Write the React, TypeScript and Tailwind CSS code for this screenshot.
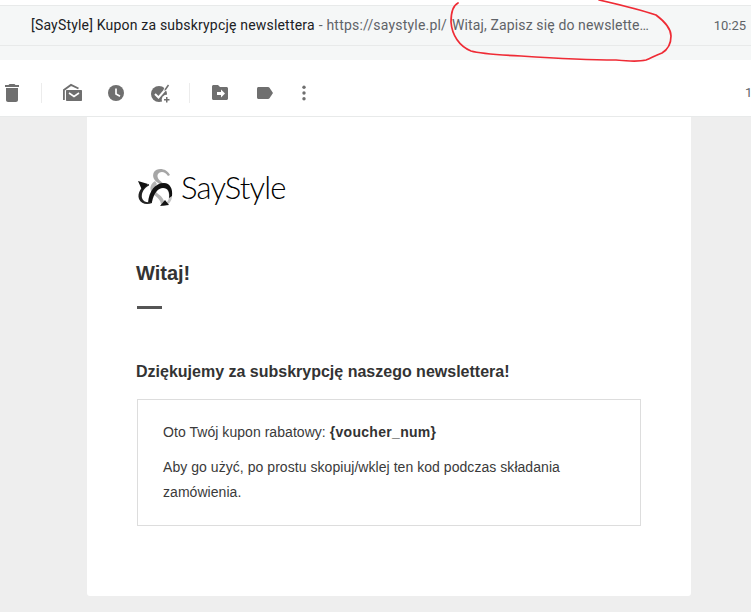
import React from "react";

function Icon({ children }: { children: React.ReactNode }) {
  return (
    <svg width="24" height="24" viewBox="0 0 24 24" fill="#6f6f6f" className="shrink-0">
      {children}
    </svg>
  );
}

function Divider() {
  return <div className="h-5 w-px bg-[#ececec]" />;
}

function Logo() {
  return (
    <div className="flex items-center h-[38px]">
      <svg width="38" height="38" viewBox="0 0 38 38" className="shrink-0">
        {/* grey figure-of-eight */}
        <path d="M33 7C30 0 20-1 17 4c-3 6 2 10 7 13l3-1c-4-3-8-6-6-10 2-3 7-3 10 2l2-1z" fill="#a6a6a6" />
        <path d="M18 13c-6 4-6 10-1 14 3 2 7 5 7 10l3 0c1-6-3-9-7-12-3-3-3-6 0-9l-2-3z" fill="#b4b4b4" />
        <path d="M24 17c5 2 8 6 8 11 0 5-3 8-7 9l1 1c6-1 9-5 9-10 0-6-4-10-9-12l-2 1z" fill="#c4c4c4" />
        {/* black swoosh */}
        <path d="M11 35C12 23 18 15 27 15c6 0 9 6 8 13l-3 2c1-6-1-10-6-10-5 0-9 5-11 14l-4 1z" fill="#111111" />
        {/* rings with their arrow tips */}
        <path d="M12 16C4 18 0 25 2 31c2 5 8 6 13 4l0-1.500C11 35 6 34 5 30c-1-5 2-10 7-12.500z" fill="#222222" />
        <path d="M1 13l10 3-6 6zM23 38l9-1-4-5z" fill="#111111" />
      </svg>
      <span className="ml-[6px] font-['Lato',sans-serif] font-light text-[31px] leading-none text-black tracking-[-0.85px]">SayStyle</span>
    </div>
  );
}

export default function App() {
  return (
    <div className="relative h-[612px] w-[751px] overflow-hidden bg-white font-['Roboto',sans-serif]">
      <div className="h-[5px]" />

      {/* message row */}
      <div className="flex h-[41px] items-center border-y border-[#e8eaea] bg-[#f5f7f7] pl-[31px] pr-[5px] text-[14px] tracking-[0.19px]">
        <span className="text-[#202124]">[SayStyle] Kupon za subskrypcję newslettera</span>
        <span className="ml-1 text-[#5f6368]">- https://saystyle.pl/</span>
        <span className="ml-[5px] tracking-[0.13px] text-[#5f6368]">Witaj, Zapisz się do newslette…</span>
        <span className="ml-auto text-[13px] tracking-normal text-[#5f6368]">10:25</span>
      </div>
      <div className="h-[14px] bg-[#f5f7f7]" />

      {/* toolbar */}
      <div className="flex h-[57px] items-center border-b border-[#e8eaea] pt-[10px]">
        <Icon>
          <path d="M6 19c0 1.100.9 2 2 2h8c1.100 0 2-.9 2-2V7H6v12zM19 4h-3.500l-1-1h-5l-1 1H5v2h14V4z" />
        </Icon>
        <div className="ml-[17px]"><Divider /></div>
        <div className="ml-[18px]">
          <Icon>
            <path d="M3.900 19V9L11 3.900 18.500 7.500" fill="none" stroke="#6f6f6f" strokeWidth="1.800" />
            <path d="M7 9h14c.6 0 1 .4 1 1v9c0 .6-.4 1-1 1H7c-.6 0-1-.4-1-1v-9c0-.6.4-1 1-1z" />
            <path d="M9 12l5 3.500 5-3.500" fill="none" stroke="#ffffff" strokeWidth="1.600" />
          </Icon>
        </div>
        <div className="ml-[20px]">
          <Icon>
            <circle cx="12" cy="12" r="8" />
            <path d="M12 7.500V13l4 2.200" fill="none" stroke="#ffffff" strokeWidth="1.700" />
          </Icon>
        </div>
        <div className="ml-[20px]">
          <Icon>
            <circle cx="11" cy="13" r="8" />
            <path d="M7 13l3.500 3.500L16.500 9.500" fill="none" stroke="#ffffff" strokeWidth="2" />
            <path d="M16.800 9.500 20 5" fill="none" stroke="#ffffff" strokeWidth="3.500" />
            <path d="M17 9 20.500 4" fill="none" stroke="#6f6f6f" strokeWidth="1.500" />
            <circle cx="18.700" cy="18.700" r="5" fill="#ffffff" />
            <path d="M18 16h1.500v2h2v1.500h-2v2H18v-2h-2V18h2z" />
          </Icon>
        </div>
        <div className="ml-[17px]"><Divider /></div>
        <div className="ml-[19px]">
          <Icon>
            <path d="M4.500 4H9l2 2h6.500C18.300 6 19 6.700 19 7.500v10c0 .8-.7 1.500-1.500 1.500h-13C3.700 19 3 18.300 3 17.500v-12C3 4.700 3.700 4 4.500 4z" />
            <path d="M8 11h4V8.500l4 4-4 4V14H8z" fill="#ffffff" />
          </Icon>
        </div>
        <div className="ml-[20px]">
          <Icon>
            <path d="M5.500 6H15c.6 0 1.200.3 1.500.7L20 12l-3.500 5.300c-.3.4-.9.7-1.500.7H5.500C4.700 18 4 17.300 4 16.500v-9C4 6.700 4.700 6 5.500 6z" />
          </Icon>
        </div>
        <div className="ml-[15px]">
          <Icon>
            <circle cx="12" cy="6.300" r="1.700" />
            <circle cx="12" cy="12" r="1.700" />
            <circle cx="12" cy="17.700" r="1.700" />
          </Icon>
        </div>
        <span className="ml-auto w-[6px] text-[13px] text-[#5f6368]">1</span>
      </div>

      {/* email body */}
      <div className="h-[495px] bg-[#eeeeee] pl-[87px]">
        <div className="h-[479px] w-[604px] rounded-b-[3px] bg-white px-[50px] pt-[51px] font-['Liberation_Sans',sans-serif] text-[#333333]">
          <Logo />
          <h1 className="mt-[54px] -ml-px text-[20px] font-bold leading-[26px]">Witaj!</h1>
          <div className="mt-[20px] h-[3px] w-[25px] bg-[#555555]" />
          <h2 className="mt-[53px] -ml-px text-[16px] font-bold leading-[20px]">Dziękujemy za subskrypcję naszego newslettera!</h2>
          <div className="mt-[17px] h-[127px] w-[504px] border border-[#dddddd] px-[25px] pt-[20px] text-[14px] leading-[25px] tracking-[0.05px] text-[#3a3a3a]">
            <p>Oto Twój kupon rabatowy: <strong className="tracking-[0.3px] text-[#333333]">{"{voucher_num}"}</strong></p>
            <p className="mt-[10px]">Aby go użyć, po prostu skopiuj/wklej ten kod podczas składania zamówienia.</p>
          </div>
        </div>
      </div>

      {/* red marker annotation over the screenshot */}
      <svg width="751" height="70" viewBox="0 0 751 70" fill="none" className="pointer-events-none absolute left-0 top-0">
        <path
          d="M458 3C452 6 451 14 451 22c1 13 8 24 20 29 10 3 30 4 50 5 30 2 70 4 95 4 10 1 22 2 30 0 5-2 10-5 16-7 5-3 9-9 9-17 0-8-7-15-15-21C650 13 625 6 599 0"
          stroke="#ef2b35"
          strokeWidth="1.700"
          strokeLinecap="round"
        />
      </svg>
    </div>
  );
}
